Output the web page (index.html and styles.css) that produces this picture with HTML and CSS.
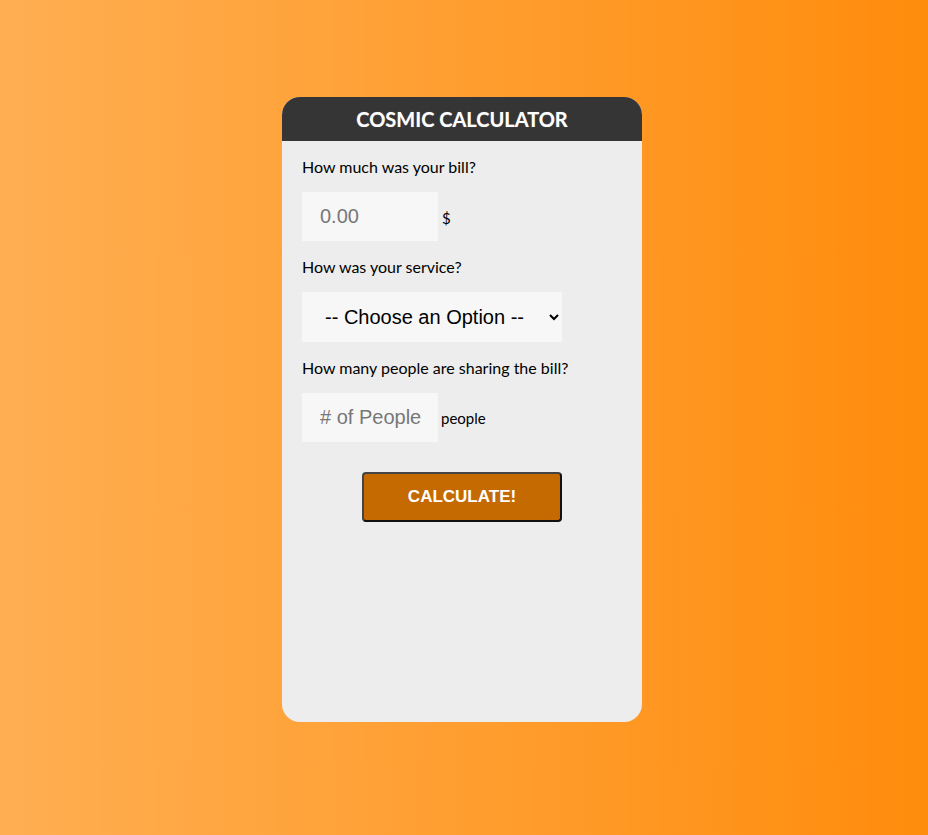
FILE: index.html
```html
<!DOCTYPE html>
<html>
<head>
<meta charset="utf-8">
<link rel="stylesheet" href="styles.css">
</head>
<body>
<div class="page">
  <div class="card">
    <h1 class="title">COSMIC CALCULATOR</h1>
    <form class="form">
      <p class="label">How much was your bill?</p>
      <div class="row">
        <input class="field" type="text" placeholder="0.00"><span class="unit">$</span>
      </div>
      <p class="label">How was your service?</p>
      <div class="row">
        <select class="select">
          <option>-- Choose an Option --</option>
        </select>
      </div>
      <p class="label">How many people are sharing the bill?</p>
      <div class="row">
        <input class="field" type="text" placeholder="# of People"><span class="unit people">people</span>
      </div>
      <div class="btnrow">
        <button type="button" class="btn">CALCULATE!</button>
      </div>
    </form>
  </div>
</div>
</body>
</html>
```
FILE: styles.css
```css
html, body {
  margin: 0;
  padding: 0;
  height: 100%;
}
body {
  background: linear-gradient(to right, #ffae52 0%, #ff9e30 50%, #ff8c0c 100%);
  font-family: Lato, "Liberation Sans", sans-serif;
}
.page {
  display: flex;
  justify-content: center;
  padding-top: 97px;
  padding-right: 4px;
}
.card {
  width: 360px;
  height: 625px;
  background: #ededed;
  border-radius: 18px;
  overflow: hidden;
}
.title {
  margin: 0;
  height: 44px;
  line-height: 44px;
  background: #353535;
  color: #fff;
  text-align: center;
  font-family: Lato, sans-serif;
  font-weight: 700;
  font-size: 20px;
  text-shadow: 0 0 1px rgba(255,255,255,0.4);
}
.form {
  padding: 0 20px;
}
.label {
  margin: 0;
  font-size: 16px;
  line-height: 20px;
  color: #000;
  height: 36px;
  box-sizing: border-box;
  padding-top: 16px;
}
.row {
  display: flex;
  align-items: center;
  margin-top: 15px;
}
.field {
  width: 136px;
  height: 49px;
  box-sizing: border-box;
  border: none;
  background: #f7f7f7;
  padding: 0 0 0 18px;
  font-family: "Liberation Sans", Arial, sans-serif;
  font-size: 20px;
  color: #333;
  outline: none;
}
.field::placeholder {
  color: #777;
}
.unit {
  margin-left: 4px;
  font-size: 15px;
  padding-top: 2px;
}
.people {
  margin-left: 3px;
  padding-top: 0;
}
.select {
  width: 260px;
  height: 50px;
  box-sizing: border-box;
  border: none;
  background: #f7f7f7;
  padding: 0 10px 0 19px;
  font-family: "Liberation Sans", Arial, sans-serif;
  font-size: 20px;
  color: #000;
  outline: none;
}
.btnrow {
  display: flex;
  justify-content: center;
  margin-top: 30px;
}
.btn {
  width: 200px;
  height: 50px;
  background: #c46a00;
  border: 2px solid #444;
  border-right-color: #111;
  border-bottom-color: #111;
  border-radius: 4px;
  color: #fff;
  font-family: "Liberation Sans", Arial, sans-serif;
  font-weight: 700;
  font-size: 17px;
}
```
